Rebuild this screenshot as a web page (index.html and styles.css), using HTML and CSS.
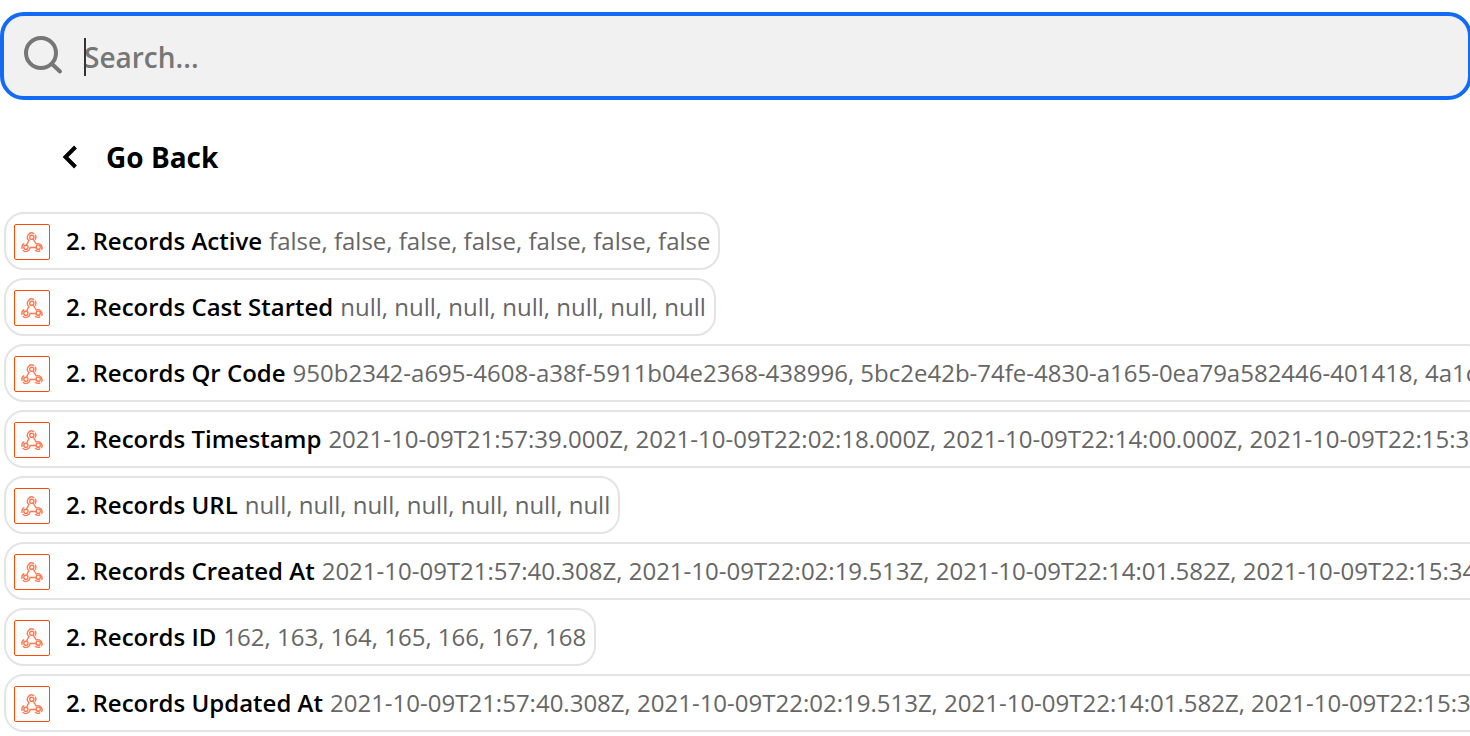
FILE: index.html
```html
<!DOCTYPE html>
<html lang="en">
<head>
<meta charset="utf-8">
<title>Insert data</title>
<link rel="stylesheet" href="styles.css">
</head>
<body>
<svg class="defs" aria-hidden="true">
  <symbol id="webhook" viewBox="0 0 34 34">
    <g fill="none" stroke="#ff7a52" stroke-width="1.4" stroke-linecap="round">
      <circle cx="16.800" cy="12.300" r="2.100"/>
      <circle cx="10.900" cy="22.300" r="2.100"/>
      <circle cx="23.200" cy="22.200" r="2.100"/>
      <path d="M18.800 8.500A4.300 4.300 0 0 0 13.900 15.500L11.700 19.900"/>
      <path d="M20.400 10.200A4.300 4.300 0 0 1 20.500 14.200"/>
      <path d="M18.200 14.200L21.200 19A4.300 4.300 0 0 1 26.800 24.500"/>
      <path d="M24.800 26A4.300 4.300 0 0 1 20.500 25.500"/>
      <path d="M20.900 22.500H15.200A4.300 4.300 0 0 1 8.200 25.500"/>
      <path d="M7 23.300A4.300 4.300 0 0 1 8.800 18.800"/>
    </g>
  </symbol>
</svg>
<main class="picker">
  <label class="search">
    <svg class="search-icon" viewBox="0 0 40 40" aria-hidden="true"><g fill="none" stroke="#767676" stroke-width="4" stroke-linecap="round"><circle cx="18" cy="18" r="15"/><path d="M29 29l8 7.500"/></g></svg>
    <span class="field">
      <input class="search-input" type="text" placeholder="Search..." aria-label="Search">
      <span class="caret"></span>
    </span>
  </label>
  <button class="back" type="button">
    <svg class="back-icon" viewBox="0 0 16 24" aria-hidden="true"><path d="M13.500 2L3.500 12l10 10" fill="none" stroke="#000" stroke-width="4"/></svg>
    Go Back
  </button>
  <div class="list">
    <button class="pill" type="button"><svg class="app"><use href="#webhook"/></svg><span class="name">2. Records Active</span><span class="value">false, false, false, false, false, false, false</span></button>
    <button class="pill" type="button"><svg class="app"><use href="#webhook"/></svg><span class="name">2. Records Cast Started</span><span class="value">null, null, null, null, null, null, null</span></button>
    <button class="pill" type="button"><svg class="app"><use href="#webhook"/></svg><span class="name">2. Records Qr Code</span><span class="value">950b2342-a695-4608-a38f-5911b04e2368-438996, 5bc2e42b-74fe-4830-a165-0ea79a582446-401418, 4a1c</span></button>
    <button class="pill" type="button"><svg class="app"><use href="#webhook"/></svg><span class="name">2. Records Timestamp</span><span class="value">2021-10-09T21:57:39.000Z, 2021-10-09T22:02:18.000Z, 2021-10-09T22:14:00.000Z, 2021-10-09T22:15:33.000Z</span></button>
    <button class="pill" type="button"><svg class="app"><use href="#webhook"/></svg><span class="name">2. Records URL</span><span class="value">null, null, null, null, null, null, null</span></button>
    <button class="pill" type="button"><svg class="app"><use href="#webhook"/></svg><span class="name">2. Records Created At</span><span class="value">2021-10-09T21:57:40.308Z, 2021-10-09T22:02:19.513Z, 2021-10-09T22:14:01.582Z, 2021-10-09T22:15:34.000Z</span></button>
    <button class="pill" type="button"><svg class="app"><use href="#webhook"/></svg><span class="name">2. Records ID</span><span class="value">162, 163, 164, 165, 166, 167, 168</span></button>
    <button class="pill" type="button"><svg class="app"><use href="#webhook"/></svg><span class="name">2. Records Updated At</span><span class="value">2021-10-09T21:57:40.308Z, 2021-10-09T22:02:19.513Z, 2021-10-09T22:14:01.582Z, 2021-10-09T22:15:34.000Z</span></button>
  </div>
</main>
</body>
</html>
```
FILE: styles.css
```css
* {
  box-sizing: border-box;
}

body {
  margin: 0;
  overflow: hidden;
  background: #fff;
  font-family: "Open Sans", "Noto Sans", sans-serif;
}

button,
input {
  margin: 0;
  border: 0;
  background: none;
  font: inherit;
}

.defs {
  position: absolute;
  width: 0;
  height: 0;
}

.picker {
  padding-top: 12px;
}

.search {
  display: flex;
  align-items: center;
  gap: 21px;
  height: 88px;
  margin-right: -2px;
  padding: 0 19px;
  border: 4px solid #136bf5;
  border-radius: 24px;
  background: #f1f1f1;
}

.search-icon {
  width: 40px;
  height: 40px;
  margin-bottom: 2px;
}

.field {
  position: relative;
  flex: 1;
  padding-top: 2px;
}

.search-input {
  display: block;
  width: 100%;
  height: 40px;
  padding: 0;
  outline: 0;
  font-size: 28px;
  font-weight: 600;
}

.search-input::placeholder {
  color: #767676;
  opacity: 1;
}

.caret {
  position: absolute;
  top: 3px;
  left: 0;
  width: 2px;
  height: 38px;
  background: #333;
}

.back {
  display: flex;
  align-items: center;
  gap: 28px;
  height: 40px;
  margin: 37px 0 35px;
  padding: 0 62px;
  color: #000;
  font-size: 28px;
  font-weight: 700;
}

.back-icon {
  width: 16px;
  height: 24px;
}

.list {
  display: flex;
  flex-direction: column;
  align-items: flex-start;
  gap: 8px;
  padding-left: 4px;
}

.pill {
  display: flex;
  align-items: center;
  height: 58px;
  padding: 2px 8px 0;
  border: 2px solid #e4e4e4;
  border-radius: 20px;
  color: #666;
  font-size: 24px;
  white-space: nowrap;
}

.app {
  width: 36px;
  height: 36px;
  margin-right: 16px;
  border: 1px solid #ff4a00;
  border-radius: 2px;
}

.name,
.value {
  padding-bottom: 4px;
}

.name {
  margin-right: 7px;
  color: #000;
  font-weight: 600;
}
```
